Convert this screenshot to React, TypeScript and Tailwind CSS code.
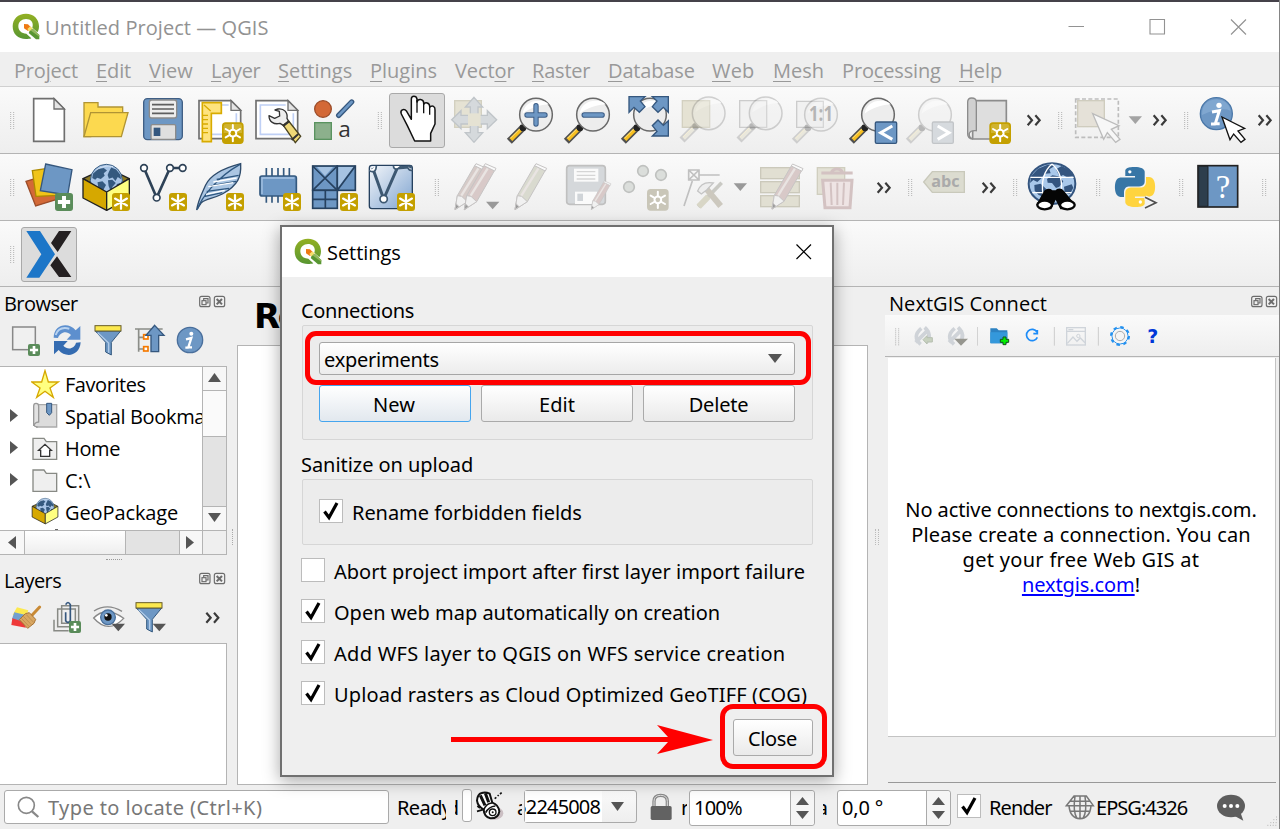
import React from "react";

type Pt = { children?: React.ReactNode };
type GlyphProps = Pt & { o: [number, number]; x: number; y: number; w: number; h: number; className?: string };

/* Drawing sheets: every sheet is drawn at three units per pixel from its own origin. */
const A: [number, number] = [0, 0];
const B: [number, number] = [380, 80];
const C: [number, number] = [800, 80];
const D: [number, number] = [0, 150];
const E: [number, number] = [0, 285];
const F: [number, number] = [0, 555];
const G: [number, number] = [380, 770];
const H: [number, number] = [820, 770];
const I: [number, number] = [870, 280];

function Glyph({ o, x, y, w, h, className = "", children }: GlyphProps) {
  return (
    <svg
      width={w}
      height={h}
      viewBox={`${(x - o[0]) * 3} ${(y - o[1]) * 3} ${w * 3} ${h * 3}`}
      className={`block shrink-0 ${className}`}
      fill="none"
    >
      {children}
    </svg>
  );
}

const T1 = { y: 87, h: 66 };
const T2 = { y: 154, h: 66 };

function Grip({ x, y }: { x: number; y: number }) {
  return (
    <g stroke="#b3b3b3" strokeWidth="3" strokeDasharray="3 3">
      <path d={`M${x} ${y}v51M${x + 9} ${y}v51`} />
    </g>
  );
}

function More({ x, y }: { x: number; y: number }) {
  return (
    <g transform={`translate(${x} ${y})`} stroke="#3a3a3a" strokeWidth="6.5">
      <path d="M2 -15L15 0L2 15M25 -15L38 0L25 15" />
    </g>
  );
}

function Down({ x, y, c = "#999" }: { x: number; y: number; c?: string }) {
  return <path d={`M${x - 20} ${y - 11}h40l-20 23z`} fill={c} />;
}

function Gold({ x, y, s = 65, plain = false, dim = false }: { x: number; y: number; s?: number; plain?: boolean; dim?: boolean }) {
  return (
    <g transform={`translate(${x} ${y}) scale(${s / 65})`}>
      <rect width="65" height="65" rx="11" fill={dim ? "#c9c6b8" : "#c4a000"} />
      {!dim && !plain && <path d="M5 32V12q0-7 7-7h41q7 0 7 7v20z" fill="#d9bf4e" opacity=".6" />}
      <g stroke="#fff" strokeWidth={plain ? 8 : 6} strokeLinecap="round">
        <path d="M32.5 8V57M11 20L54 45M54 20L11 45" />
        {!plain && <circle cx="32.5" cy="32.5" r="13" fill="#fff" stroke="none" />}
      </g>
      {!plain && <circle cx="32.5" cy="32.5" r="7" fill={dim ? "#c9c6b8" : "#c4a000"} />}
    </g>
  );
}

function Plus({ x, y, s }: { x: number; y: number; s: number }) {
  return (
    <g transform={`translate(${x} ${y}) scale(${s / 50})`}>
      <rect width="50" height="50" rx="8" fill="#5a8c5a" />
      <path d="M25 8V42M8 25H42" stroke="#fff" strokeWidth="11" />
    </g>
  );
}

function Mag({ x, y, dim = false, children }: Pt & { x: number; y: number; dim?: boolean }) {
  return (
    <g transform={`translate(${x} ${y})`}>
      <g opacity={dim ? 0.28 : 1}>
        <path d="M-80 80L-38 38" stroke={dim ? "#777" : "#505050"} strokeWidth="21" />
        <path d="M-75 75L-46 46" stroke={dim ? "#d8d0a8" : "#f8c020"} strokeWidth="11" />
        <path d="M-77 71L-48 42" stroke="#ffe58c" strokeWidth="3" />
        <circle cx="-39" cy="39" r="10" fill="#222" />
        <circle r="49" fill="#ededed" stroke="#696969" strokeWidth="4.5" />
        <path d="M-40 -3C-37 -28 -17 -42 7 -42C26 -42 35 -36 38 -30C17 -32 -15 -21 -40 -3Z" fill="#fff" />
      </g>
      {children}
    </g>
  );
}

function Globe({ x, y, r, dark = "#34597f", sea = "#a9c5e6" }: { x: number; y: number; r: number; dark?: string; sea?: string }) {
  return (
    <g transform={`translate(${x} ${y}) scale(${r / 50})`}>
      <circle r="49" fill={sea} stroke={dark} strokeWidth="3" />
      <path
        fill={dark}
        d="M-41 -20L-25 -35L-8 -38L2 -30L-8 -22L-5 -14L-17 -4L-28 -8L-34 -2L-43 -7ZM-27 6L-12 3L-1 14L-8 27L-16 42L-24 27ZM8 -26L15 -39L30 -33L43 -17L45 -3L35 -10L28 2L19 -9L8 -5L4 -16ZM5 0L18 -2L29 8L19 20L14 35L7 17ZM32 11L43 8L39 25L30 28Z"
      />
      <path d="M-30 -32Q-4 -49 20 -42" stroke="#fff" strokeWidth="3" opacity=".5" />
    </g>
  );
}

function PkgBox({ x, y, s }: { x: number; y: number; s: number }) {
  return (
    <g transform={`translate(${x} ${y}) scale(${s})`} strokeLinejoin="round">
      <path d="M249 86L320 53L388 86L320 126Z" fill="#8d7a22" stroke="#222" strokeWidth="4" />
      <Globe x={319} y={91} r={49} />
      <path d="M249 86L320 126V181L249 144Z" fill="#d6a800" stroke="#222" strokeWidth="4" />
      <path d="M388 86L320 126V181L388 144Z" fill="#ffff80" stroke="#222" strokeWidth="4" />
    </g>
  );
}

function QLogo({ className = "" }: { className?: string }) {
  return (
    <svg width="28" height="28" viewBox="0 0 84 84" className={`block shrink-0 ${className}`} fill="none">
      <defs>
        <linearGradient id="qg" x1="0" y1="0" x2="0" y2="1">
          <stop offset="0" stopColor="#93b023" />
          <stop offset="1" stopColor="#589632" />
        </linearGradient>
      </defs>
      <path
        fill="url(#qg)"
        fillRule="evenodd"
        d="M42 2C65 2 81 18 81 40C81 48 79 54 76 58L61 44C66 28 56 18 42 18C29 18 19 27 19 40C19 53 29 62 43 62L58 76C53 78 48 78 42 78C18 78 2 63 2 40C2 18 18 2 42 2Z"
      />
      <path d="M36 33L48 34L58 44L48 54L36 46Z" fill="#ee7913" />
      <path d="M46 48L55 40L65 50L55 58Z" fill="#f5e06c" />
      <path d="M53 55L62 47L82 66V79H72L50 60Z" fill="#589632" />
      <path d="M62 47L82 66V71L55 52Z" fill="#93b85c" />
    </svg>
  );
}

function Pencil({ x, y, fill = "#d8c9c8" }: { x: number; y: number; fill?: string }) {
  return (
    <g transform={`translate(${x} ${y})`} stroke="#c6c4c4" strokeWidth="3" strokeLinejoin="round">
      <path d="M0 138L7 96L59 6L91 20L37 114Z" fill={fill} />
      <path d="M0 138L7 96L20 98L37 114Z" fill="#f1f1f1" />
      <path d="M0 138L3 120L12 129Z" fill="#999" />
      <path d="M59 6L63 0L95 14L91 22Z" fill="#fafafa" />
      <path d="M19 96L70 14" stroke="#e9e4e2" strokeWidth="7" />
    </g>
  );
}

function Funnel({ x, y }: { x: number; y: number }) {
  return (
    <g transform={`translate(${x} ${y})`} stroke="#34597f" strokeWidth="3">
      <path d="M2 17H78L50 51V89L33 80V51Z" fill="#6d97c4" />
      <path d="M9 22L42 53V82" stroke="#b1cbe8" strokeWidth="4" />
      <rect x="1" y="1" width="78" height="16" fill="#fce94f" stroke="#685d28" />
    </g>
  );
}

function PageShape({ x }: { x: number }) {
  return (
    <g transform={`translate(${x} 0)`}>
      <path d="M2 302H98L127 331V416H2Z" fill="#fff" stroke="#6f6f6f" strokeWidth="5" />
      <path d="M91 315H15V403H114V340" stroke="#bfd0f5" strokeWidth="5" />
      <path d="M98 302V331H127Z" fill="#e5e5e5" stroke="#6f6f6f" strokeWidth="4" />
    </g>
  );
}

function Toolbar1() {
  const t = T1;
  return (
    <div className="flex h-[67px] shrink-0 border-b border-[#b4b4b4] bg-gradient-to-b from-[#fafafa] to-[#eeeeee]">
      <Glyph o={A} x={0} w={20} {...t}><Grip x={32} y={336} /></Glyph>
      <Glyph o={A} x={20} w={57} {...t}>
        <path d="M101 296H162L193 327V424H101Z" fill="#fff" stroke="#6f6f6f" strokeWidth="5" />
        <path d="M162 296V327H193Z" fill="#e5e5e5" stroke="#6f6f6f" strokeWidth="4" />
      </Glyph>
      <Glyph o={A} x={77} w={57} {...t}>
        <g fill="#fcd94f" stroke="#b09434" strokeWidth="4">
          <path d="M252 308H294V321H368V340H272V410H252Z" />
          <path d="M272 338H384L364 410H252Z" />
        </g>
      </Glyph>
      <Glyph o={A} x={134} w={58} {...t}>
        <rect x="431" y="296" width="116" height="123" rx="11" fill="#6d97c4" stroke="#405f85" strokeWidth="4" />
        <rect x="448" y="300" width="82" height="54" rx="7" fill="#ededed" stroke="#8b8b8b" strokeWidth="4" />
        <path d="M456 314H522M456 327H522M456 340H522" stroke="#5e5e5e" strokeWidth="5" />
        <rect x="453" y="374" width="74" height="44" rx="4" fill="#dfdfdf" stroke="#8b8b8b" strokeWidth="4" />
        <rect x="461" y="383" width="20" height="25" fill="#35577e" />
      </Glyph>
      <Glyph o={A} x={192} w={57} {...t}>
        <PageShape x={595} />
        <path d="M607 308H664V340H634V425H607Z" fill="#fee37e" stroke="#d8ab00" strokeWidth="5" />
        <path d="M612 315L632 333M608 346H624M608 359H624M608 372H624M608 385H624M608 398H624" stroke="#d8ab00" strokeWidth="4" />
        <Gold x={666} y={367} />
      </Glyph>
      <Glyph o={A} x={249} w={58} {...t}>
        <PageShape x={766} />
        <path d="M834 327C852 324 864 338 861 355L866 364L850 376L840 370C822 375 807 365 807 347L824 355L839 348L838 334L825 330Z" fill="#eee" stroke="#333" strokeWidth="4" strokeLinejoin="round" />
        <path d="M850 376L866 363L902 409L886 428Z" fill="#efd877" stroke="#4a4320" strokeWidth="4" />
        <path d="M849 379L868 364M875 420L895 402" stroke="#333" strokeWidth="6" />
      </Glyph>
      <Glyph o={A} x={307} w={58} {...t}>
        <circle cx="969" cy="327" r="25" fill="#d36937" stroke="#9b4d2a" strokeWidth="4" />
        <path d="M1016 346L1055 306" stroke="#35577e" strokeWidth="16" strokeLinecap="round" />
        <path d="M1016 346L1055 306" stroke="#6d97c4" strokeWidth="8" strokeLinecap="round" />
        <rect x="944" y="368" width="50" height="50" fill="#8cb08c" stroke="#5a9360" strokeWidth="4" />
        <text x="1015" y="412" fontSize="68" fill="#333" fontFamily="Open Sans">a</text>
      </Glyph>
      <Glyph o={A} x={365} w={24} {...t}><Grip x={1135} y={336} /></Glyph>
      <div className="mt-[6px] h-[55px] w-[56px] shrink-0 overflow-hidden rounded-[3px] border border-[#a9a9a9] bg-[#dcdcdc]">
        <Glyph o={B} x={390} y={94} w={54} h={53}>
          <path
            d="M104 183L82 137L64 102C59 90 72 84 80 94L94 118V57C94 46 109 46 111 57V66C114 55 130 57 131 68V73C135 65 149 68 149 79V82C157 74 166 80 165 90V132L152 160V183Z"
            fill="#fff" stroke="#111" strokeWidth="4.5" strokeLinejoin="round"
          />
          <path d="M111 60V98M131 68V100M149 80V104" stroke="#111" strokeWidth="4" />
        </Glyph>
      </div>
      <Glyph o={B} x={445} w={57} {...t}>
        <rect x="224" y="62" width="80" height="80" fill="#e5e2d3" stroke="#d3d0c0" strokeWidth="4" />
        <path d="M282 52L308 81H294V106H322V92L350 119L322 146V132H294V158H308L282 187L256 158H271V132H243V146L215 119L243 92V106H271V81H256Z" fill="#d5d9dc" stroke="#c0c5c9" strokeWidth="4" />
        <rect x="264" y="100" width="38" height="38" fill="#e5e2d3" />
      </Glyph>
      <Glyph o={B} x={502} w={57} {...t}>
        <Mag x={468} y={104}>
          <path d="M-27 1H27M0 -27V28" stroke="#3b5c85" strokeWidth="16" strokeLinecap="round" />
          <path d="M-27 1H27M0 -27V28" stroke="#6d97c4" strokeWidth="10" strokeLinecap="round" />
        </Mag>
      </Glyph>
      <Glyph o={B} x={559} w={57} {...t}>
        <Mag x={639} y={104}>
          <path d="M-26 1H27" stroke="#3b5c85" strokeWidth="17" strokeLinecap="round" />
          <path d="M-26 1H27" stroke="#6d97c4" strokeWidth="11" strokeLinecap="round" />
        </Mag>
      </Glyph>
      <Glyph o={B} x={616} w={57} {...t}>
        <Mag x={810} y={104} />
        <g fill="#6d97c4" stroke="#35577e" strokeWidth="4">
          <path d="M747 50H795L781 63L795 80L778 97L762 82L747 97Z" />
          <path d="M865 50H817L831 63L817 80L834 97L850 82L865 97Z" />
          <path d="M865 168H817L831 154L817 137L834 120L850 136L865 122Z" />
        </g>
      </Glyph>
      <Glyph o={B} x={673} w={57} {...t}>
        <rect x="907" y="62" width="82" height="80" fill="#e5e2d3" stroke="#d3d0c0" strokeWidth="4" />
        <Mag x={986} y={100} dim />
      </Glyph>
      <Glyph o={B} x={730} w={57} {...t}>
        <path d="M1079 62H1160V142H1079Z" fill="#f1f1f1" stroke="#ccc" strokeWidth="4" />
        <Mag x={1157} y={100} dim />
      </Glyph>
      <Glyph o={C} x={787} w={57} {...t}>
        <path d="M-10 64H70V142H-10Z" fill="#f1f1f1" stroke="#ccc" strokeWidth="4" />
        <Mag x={63} y={104} dim />
        <text x="63" y="124" textAnchor="middle" fontSize="62" fontWeight="700" fill="#b5b5b5" fontFamily="Open Sans" textLength="72" lengthAdjust="spacingAndGlyphs">1:1</text>
      </Glyph>
      <Glyph o={C} x={844} w={57} {...t}>
        <Mag x={234} y={104} />
        <rect x="226" y="126" width="64" height="64" rx="4" fill="#6d97c4" stroke="#35577e" strokeWidth="4" />
        <path d="M277 138L242 158L277 178" stroke="#fff" strokeWidth="9" />
      </Glyph>
      <Glyph o={C} x={901} w={57} {...t}>
        <Mag x={405} y={104} dim />
        <rect x="397" y="126" width="63" height="64" rx="4" fill="#d6dade" stroke="#c2c5c8" strokeWidth="4" />
        <path d="M413 138L447 158L413 178" stroke="#fff" strokeWidth="9" />
      </Glyph>
      <Glyph o={C} x={958} w={59} {...t}>
        <path d="M518 62H619V177H518Z" fill="#dedede" stroke="#8c8c8c" strokeWidth="5" />
        <path d="M503 162V66Q503 54 515 54Q529 54 529 66V152Q512 150 508 160Q506 172 518 177Q503 176 503 162Z" fill="#d0d0d0" stroke="#8c8c8c" strokeWidth="4" />
        <Gold x={568} y={127} />
      </Glyph>
      <Glyph o={C} x={1017} w={33} {...t}><More x={681} y={121} /></Glyph>
      <Glyph o={C} x={1050} w={20} {...t}><Grip x={776} y={96} /></Glyph>
      <Glyph o={C} x={1070} w={56} {...t}>
        <rect x="827" y="57" width="128" height="115" stroke="#bdbdbd" strokeWidth="5" strokeDasharray="12 7" />
        <rect x="833" y="62" width="80" height="78" fill="#e5e1d8" stroke="#cfccbe" strokeWidth="4" />
        <path d="M878 101L957 137L934 148L960 178L947 187L922 158L911 178Z" fill="#f7f7f7" stroke="#bbb" strokeWidth="4" />
      </Glyph>
      <Glyph o={C} x={1126} w={20} {...t}><Down x={1006} y={120} c="#a3a3a3" /></Glyph>
      <Glyph o={C} x={1146} w={31} {...t}><More x={1059} y={121} /></Glyph>
      <Glyph o={C} x={1177} w={18} {...t}><Grip x={1154} y={96} /></Glyph>
      <Glyph o={C} x={1195} w={55} {...t}>
        <circle cx="1249" cy="101" r="48" fill="#6d97c4" stroke="#4a77a8" strokeWidth="4" />
        <path d="M1206 105Q1206 60 1250 58Q1285 60 1292 92Q1260 80 1206 105Z" fill="#8db2d8" opacity=".6" />
        <circle cx="1257" cy="76" r="8" fill="#fff" />
        <path d="M1236 96L1258 92L1246 131H1259M1233 132H1247" stroke="#fff" strokeWidth="9" />
        <path d="M1266 111L1334 145L1314 153L1335 178L1323 187L1301 162L1290 179Z" fill="#fff" stroke="#111" strokeWidth="4" />
      </Glyph>
      <Glyph o={C} x={1250} w={29} {...t}><More x={1374} y={121} /></Glyph>
    </div>
  );
}

const PY1 = "M14.25.18l.9.2.73.26.59.3.45.32.34.34.25.34.16.33.1.3.04.26.02.2-.01.13V8.5l-.05.63-.13.55-.21.46-.26.38-.3.31-.33.25-.35.19-.35.14-.33.1-.3.07-.26.04-.21.02H8.77l-.69.05-.59.14-.5.22-.41.27-.33.32-.27.35-.2.36-.15.37-.1.35-.07.32-.04.27-.02.21v3.06H3.17l-.21-.03-.28-.07-.32-.12-.35-.18-.36-.26-.36-.36-.35-.46-.32-.59-.28-.73-.21-.88-.14-1.05-.05-1.23.06-1.22.16-1.04.24-.87.32-.71.36-.57.4-.44.42-.33.42-.24.4-.16.36-.1.32-.05.24-.01h.16l.06.01h8.16v-.83H6.18l-.01-2.75-.02-.37.05-.34.11-.31.17-.28.25-.26.31-.23.38-.2.44-.18.51-.15.58-.12.64-.1.71-.06.77-.04.84-.02 1.27.05z";
const PY2 = "M21.04 6.11l.28.06.32.12.35.18.36.27.36.35.35.47.32.59.28.73.21.88.14 1.04.05 1.23-.06 1.23-.16 1.04-.24.86-.32.71-.36.57-.4.45-.42.33-.42.24-.4.16-.36.09-.32.05-.24.02-.16-.01h-8.22v.82h5.84l.01 2.76.02.36-.05.34-.11.31-.17.29-.25.25-.31.24-.38.2-.44.17-.51.15-.58.13-.64.09-.71.07-.77.04-.84.01-1.27-.04-1.07-.14-.9-.2-.73-.25-.59-.3-.45-.33-.34-.34-.25-.34-.16-.33-.1-.3-.04-.25-.02-.2.01-.13v-5.34l.05-.64.13-.54.21-.46.26-.38.3-.32.33-.24.35-.2.35-.14.33-.1.3-.06.26-.04.21-.02.13-.01h5.84l.69-.05.59-.14.5-.21.41-.28.33-.32.27-.35.2-.36.15-.36.1-.35.07-.32.04-.28.02-.21V6.07h2.09z";

function Toolbar2() {
  const t = T2;
  return (
    <div className="flex h-[67px] shrink-0 border-b border-[#b4b4b4] bg-gradient-to-b from-[#fafafa] to-[#eeeeee]">
      <Glyph o={D} x={0} w={20} {...t}><Grip x={32} y={87} /></Glyph>
      <Glyph o={D} x={20} w={57} {...t}>
        <path d="M78 94L150 72L178 146L107 168Z" fill="#d36937" stroke="#9b4d2a" strokeWidth="4" />
        <path d="M97 62L165 52L176 136L108 139Z" fill="#f0c419" stroke="#ad8a00" strokeWidth="4" />
        <path d="M137 42L216 59L203 135L121 122Z" fill="#6d97c4" stroke="#35577e" strokeWidth="4" />
        <Plus x={165} y={129} s={54} />
      </Glyph>
      <Glyph o={D} x={77} w={57} {...t}><PkgBox x={0} y={0} s={1} /><Gold x={336} y={129} s={54} plain /></Glyph>
      <Glyph o={D} x={134} w={58} {...t}>
        <path d="M432 54L470 143L510 54H548" stroke="#2e4257" strokeWidth="8" />
        <g fill="#fff" stroke="#2e4257" strokeWidth="5"><circle cx="432" cy="54" r="10" /><circle cx="470" cy="143" r="10" /><circle cx="510" cy="54" r="10" /><circle cx="548" cy="54" r="10" /></g>
        <Gold x={507} y={129} s={54} plain />
      </Glyph>
      <Glyph o={D} x={192} w={57} {...t}>
        <path d="M590 180C594 151 604 134 617 105C631 76 668 55 722 41C724 78 716 105 667 132C637 147 619 145 604 158Z" fill="#abc6e3" stroke="#2e4b6b" strokeWidth="4" />
        <path d="M592 178C603 145 650 82 720 43M612 140L667 128M620 124L687 115M632 108L708 94M650 88L716 76" stroke="#2e5780" strokeWidth="4" />
        <path d="M625 110L700 98M640 96L710 84M618 133L674 121" stroke="#fff" strokeWidth="4" />
        <Gold x={678} y={129} s={54} plain />
      </Glyph>
      <Glyph o={D} x={249} w={58} {...t}>
        <path d="M799 54V80M816 54V80M834 54V80M851 54V80M868 54V80M799 138V158M816 138V158M834 138V158" stroke="#34597f" strokeWidth="5" />
        <rect x="780" y="78" width="109" height="60" rx="6" fill="#6d97c4" stroke="#34597f" strokeWidth="5" />
        <path d="M786 132V84H883" stroke="#a8c5e4" strokeWidth="4" />
        <Gold x={849} y={129} s={54} plain />
      </Glyph>
      <Glyph o={D} x={307} w={56} {...t}>
        <g fill="#6d97c4" stroke="#26415f" strokeWidth="5">
          <rect x="938" y="48" width="74" height="73" /><rect x="1012" y="48" width="54" height="73" /><rect x="938" y="121" width="74" height="54" />
        </g>
        <path d="M951 51H999L975 78ZM1015 51H1060L1015 112Z" fill="#a6c3e2" />
        <path d="M938 48L1012 121M1012 48L938 121M1012 121L1066 48M976 121V175M938 148H1012" stroke="#26415f" strokeWidth="5" />
        <Gold x={1020} y={129} s={54} plain />
      </Glyph>
      <Glyph o={D} x={363} w={57} {...t}>
        <defs><linearGradient id="vg" x1="0" y1="0" x2="1" y2="1"><stop stopColor="#f3f6fa" /><stop offset="1" stopColor="#7ea3cf" /></linearGradient></defs>
        <rect x="1108" y="46" width="129" height="130" rx="8" fill="url(#vg)" stroke="#26415f" strokeWidth="4" />
        <path d="M1118 54L1151 147L1192 54L1235 50" stroke="#3d5872" strokeWidth="9" />
        <g fill="#fff" stroke="#3d5872" strokeWidth="5"><circle cx="1151" cy="147" r="11" /><path d="M1108 62Q1128 72 1129 48M1180 48Q1184 67 1203 48M1222 48Q1225 63 1237 61" /></g>
        <Gold x={1191} y={129} s={54} plain />
      </Glyph>
      <Glyph o={D} x={420} w={29} {...t}><Grip x={1306} y={87} /></Glyph>
      <Glyph o={B} x={449} w={56} {...t}><Pencil x={225} y={251} fill="#d6cbc8" /><Pencil x={253} y={251} fill="#d8c9c8" /><Down x={338} y={376} /></Glyph>
      <Glyph o={B} x={505} w={53} {...t}><Pencil x={405} y={251} fill="#d9dacf" /></Glyph>
      <Glyph o={B} x={558} w={58} {...t}>
        <rect x="560" y="257" width="116" height="116" rx="9" fill="#d5d8db" stroke="#c0c0c0" strokeWidth="5" />
        <rect x="582" y="266" width="73" height="39" fill="#fafafa" /><path d="M590 275H646M590 286H646M590 297H646" stroke="#d5d5d5" strokeWidth="4" />
        <rect x="585" y="335" width="67" height="37" fill="#fafafa" /><rect x="592" y="341" width="17" height="22" fill="#d0d4d8" />
        <g transform="translate(634 301) scale(.62)"><Pencil x={0} y={3} /></g>
      </Glyph>
      <Glyph o={B} x={616} w={60} {...t}>
        <g fill="#dbdedb" stroke="#bfc1bf" strokeWidth="5"><circle cx="789" cy="273" r="16" /><circle cx="843" cy="285" r="16" /><circle cx="747" cy="321" r="16" /></g>
        <Gold x={801} y={327} dim />
      </Glyph>
      <Glyph o={B} x={676} w={76} {...t}>
        <g stroke="#c0c0c0" strokeWidth="5"><path d="M926 270H957V300H926ZM926 270L957 300M957 270L926 300M957 285H1019M937 303L912 378" /></g>
        <path d="M955 380L1025 308" stroke="#c9c9c4" strokeWidth="11" /><path d="M956 380L985 350" stroke="#d8d6c6" strokeWidth="18" />
        <path d="M978 325L1022 378" stroke="#ccc8be" strokeWidth="18" />
        <path d="M953 333Q965 302 1000 309L980 330L964 342Z" fill="#eee" stroke="#c4c4c4" strokeWidth="4" />
        <Down x={1081} y={321} />
      </Glyph>
      <Glyph o={B} x={752} w={58} {...t}>
        <g fill="#e1dfd2" stroke="#cbc9bb" strokeWidth="4"><rect x="1142" y="263" width="116" height="33" /><rect x="1142" y="305" width="116" height="33" /><rect x="1142" y="347" width="116" height="33" /></g>
        <g transform="translate(1176 252) scale(.98)"><Pencil x={0} y={0} /></g>
      </Glyph>
      <Glyph o={C} x={810} w={55} {...t}>
        <rect x="52" y="263" width="82" height="80" fill="#e3e1d5" stroke="#d0cebf" strokeWidth="4" />
        <path d="M68 301H156L150 383H75Z" fill="#eee4e4" />
        <path d="M68 301H156L150 383H75ZM64 279H158M94 278Q98 267 111 267Q124 267 128 278" stroke="#d3c2c2" strokeWidth="9" />
        <path d="M92 308L95 375M112 308V375M132 308L129 375" stroke="#d3c2c2" strokeWidth="6" />
      </Glyph>
      <Glyph o={C} x={865} w={35} {...t}><More x={231} y={323} /></Glyph>
      <Glyph o={C} x={900} w={17} {...t}><Grip x={326} y={297} /></Glyph>
      <Glyph o={C} x={917} w={58} {...t}>
        <path d="M371 306L397 275H493V337H397Z" fill="#dcdcd0" stroke="#c9c9bb" strokeWidth="4" />
        <text x="394" y="322" fontSize="48" fontWeight="700" fill="#aaa" fontFamily="Open Sans" textLength="85" lengthAdjust="spacingAndGlyphs">abc</text>
      </Glyph>
      <Glyph o={C} x={975} w={30} {...t}><More x={546} y={323} /></Glyph>
      <Glyph o={C} x={1005} w={17} {...t}><Grip x={641} y={297} /></Glyph>
      <Glyph o={C} x={1022} w={63} {...t}>
        <ellipse cx="756" cy="311" rx="70" ry="61" fill="#a9c8ea" stroke="#34557f" strokeWidth="6" />
        <path
          fill="#34557f"
          d="M694 287L714 266L743 254L765 257L748 268L752 280L735 281L722 297L712 306L700 300L690 309ZM703 315L722 311L738 326L731 350L716 345L704 332ZM768 268L785 258L808 270L820 289L801 292L789 285L779 291ZM741 297L757 286L775 289L790 304L778 320L768 324L756 309L743 308ZM792 320L815 313L820 323L810 342L794 338Z"
        />
        <path d="M691 292H821M697 338H815M756 252Q720 282 729 345M756 252Q792 282 783 345" stroke="#fff" strokeWidth="4" />
        <path d="M709 374L732 333Q739 324 752 327L757 331H767L771 327Q784 323 792 333L826 374L814 388H781L767 359L754 388H720Z" fill="#050505" />
        <g fill="#fff" stroke="#050505" strokeWidth="7"><ellipse cx="734" cy="375" rx="22" ry="13" /><ellipse cx="802" cy="375" rx="22" ry="13" /></g>
      </Glyph>
      <Glyph o={C} x={1085} w={25} {...t}><Grip x={890} y={297} /></Glyph>
      <Glyph o={C} x={1110} w={60} {...t}>
        <g transform="translate(945 261) scale(5)"><path d={PY1} fill="#3776a6" /><path d={PY2} fill="#ffd43f" /><circle cx="8.9" cy="2.9" r="1" fill="#fff" /><circle cx="15.2" cy="21" r="1" fill="#fff" /></g>
        <path d="M1035 352L1068 368L1035 384" stroke="#f5f5f5" strokeWidth="12" /><path d="M1035 352L1068 368L1035 384" stroke="#505050" strokeWidth="5" />
      </Glyph>
      <Glyph o={C} x={1170} w={22} {...t}><Grip x={1139} y={297} /></Glyph>
      <Glyph o={C} x={1192} w={58} {...t}>
        <rect x="1194" y="257" width="119" height="124" fill="#6d97c4" stroke="#222" strokeWidth="5" />
        <path d="M1196 259H1224V379H1196Z" fill="#2d3e4d" stroke="#1f2327" strokeWidth="3" />
        <text x="1269" y="353" textAnchor="middle" fontSize="98" fill="#fff" fontFamily="Liberation Serif">?</text>
      </Glyph>
      <Glyph o={C} x={1250} w={29} {...t}><Grip x={1388} y={297} /></Glyph>
    </div>
  );
}

function Toolbar3() {
  return (
    <div className="flex h-[66px] shrink-0 border-b border-[#b4b4b4] bg-gradient-to-b from-[#fafafa] to-[#eeeeee]">
      <Glyph o={D} x={0} y={221} w={21} h={65}><Grip x={32} y={288} /></Glyph>
      <div className="mt-[6px] h-[55px] w-[56px] rounded-[3px] border border-[#a9a9a9] bg-[#dcdcdc]">
        <Glyph o={D} x={22} y={228} w={54} h={53}>
          <path d="M79 243H120L165 313L118 383H79L124 313Z" fill="#1c76c8" />
          <path d="M177 243H214L173 306L153 279ZM171 319L214 381H177L151 346Z" fill="#242021" />
        </Glyph>
      </div>
    </div>
  );
}

function DockButtons({ o, x, y }: { o: [number, number]; x: number; y: number }) {
  return (
    <Glyph o={o} x={x} y={y} w={29} h={14}>
      <g transform={`translate(${(x - o[0]) * 3} ${(y - o[1]) * 3})`} stroke="#6c6c6c" strokeWidth="3.5">
        <rect x="5" y="4" width="31" height="31" rx="6" /><rect x="12" y="17" width="12" height="12" /><path d="M17 17V11H30V24H24" />
        <rect x="49" y="4" width="31" height="31" rx="6" /><path d="M56 12L72 28M72 12L56 28" strokeWidth="6" />
      </g>
    </Glyph>
  );
}

function Tri({ dir }: { dir: "up" | "down" | "left" | "right" }) {
  const d = { up: "M1 10L7.5 1L14 10Z", down: "M1 2H14L7.5 11Z", left: "M11 0V13L3 6.5Z", right: "M4 0V13L12 6.5Z" }[dir];
  return <svg width="15" height="13" viewBox="0 0 15 13" className="block shrink-0"><path d={d} fill="#555" /></svg>;
}

function TreeRow({ arrow = false, icon, label, k, t = "tracking-[-0.35px]" }: { arrow?: boolean; icon: React.ReactNode; label: string; k: number; t?: string }) {
  return (
    <div className="flex h-8 w-[202px] items-center overflow-hidden">
      <div className="-mt-[3px] w-[31px] shrink-0 pl-[6px]">{arrow && <Tri dir="right" />}</div>
      <Glyph o={E} x={31} y={368 + 32 * k} w={33} h={32}>{icon}</Glyph>
      <span className={`whitespace-nowrap pl-px font-['Open_Sans',sans-serif] text-[20px] text-black ${t}`}>{label}</span>
    </div>
  );
}

function LeftDock() {
  return (
    <div className="flex w-[227px] shrink-0 flex-col">
      <div className="flex h-[34px] items-center justify-between pl-1">
        <span className="font-['Open_Sans',sans-serif] text-[20px] tracking-[-0.55px]">Browser</span>
        <div className="-mt-[5px]"><DockButtons o={E} x={198} y={294} /></div>
      </div>
      <div className="flex h-[45px] shrink-0">
        <Glyph o={E} x={0} y={321} w={46} h={45}><rect x="38" y="126" width="68" height="68" stroke="#888" strokeWidth="4.5" fill="#f0f0f0" /><Plus x={84} y={177} s={36} /></Glyph>
        <Glyph o={E} x={46} y={321} w={42} h={45}>
          <path d="M161 158C162 118 205 110 227 136L241 123V164H200L213 150C198 134 179 144 174 159Z" fill="#5d8fce" />
          <path d="M242 172C239 214 196 220 176 195L162 208V168H203L190 182C204 197 224 190 228 173Z" fill="#356cb1" />
          <path d="M167 150Q176 123 208 131" stroke="#b9d3f0" strokeWidth="6" />
        </Glyph>
        <Glyph o={E} x={88} y={321} w={44} h={45}><Funnel x={284} y={121} /></Glyph>
        <Glyph o={E} x={132} y={321} w={40} h={45}>
          <path d="M405 132H488M416 132V200M416 157H432M416 192H432" stroke="#8b8d88" strokeWidth="5" />
          <g fill="#fff" stroke="#f57900" strokeWidth="5"><rect x="431" y="149" width="13" height="13" /><rect x="431" y="185" width="13" height="13" /></g>
          <path d="M464 121L492 151H476V200H453V151H438Z" fill="#6d97c4" stroke="#35577e" strokeWidth="4" />
        </Glyph>
        <Glyph o={E} x={172} y={321} w={38} h={45}>
          <circle cx="570" cy="165" r="38" fill="#6d97c4" stroke="#4a6f9c" strokeWidth="4" /><circle cx="574" cy="146" r="6" fill="#fff" />
          <path d="M558 163L574 159L565 187H576M556 188H566" stroke="#fff" strokeWidth="7" />
        </Glyph>
      </div>
      <div className="flex h-[189px] shrink-0 flex-col border border-l-0 border-[#b4b4b4] bg-white">
        <div className="flex h-[163px] shrink-0">
          <div className="flex w-[202px] flex-col pt-[2px]">
            <TreeRow k={0} t="tracking-[-0.45px]" label="Favorites" icon={<path d="M135 254L145 288H175L150 306L160 334L135 316L110 334L120 306L95 288H125Z" fill="#ffff80" stroke="#d6a800" strokeWidth="4" />} />
            <TreeRow k={1} t="tracking-[-0.35px]" arrow label="Spatial Bookmarks" icon={<><path d="M113 356H170V423H108" fill="#dcdcdc" stroke="#aaa" strokeWidth="4" /><path d="M101 420V360Q101 352 108 352Q116 352 116 360V408Q102 409 104 420L113 424" fill="#e2e2e2" stroke="#999" strokeWidth="4" /><path d="M140 352H155V380L148 388L140 380Z" fill="#6d97c4" stroke="#35577e" strokeWidth="3" /></>} />
            <TreeRow k={2} arrow label="Home" icon={<><path d="M99 457H132L139 467H170V520H99Z" fill="#efefef" stroke="#888a85" strokeWidth="4" /><path d="M116 493L135 475L154 493H149V511H122V493Z" fill="#fff" stroke="#333" strokeWidth="4" /></>} />
            <TreeRow k={3} t="tracking-[0.2px]" arrow label="C:\" icon={<path d="M99 552H132L139 562H170V616H99Z" fill="#efefef" stroke="#888a85" strokeWidth="4" />} />
            <TreeRow k={4} t="tracking-[-0.1px]" label="GeoPackage" icon={<PkgBox x={-42} y={613} s={0.556} />} />
            <div className="flex pl-[55px]"><div className="h-px w-[3px] bg-[#666]" /></div>
          </div>
          <div className="flex w-6 flex-col border-l border-[#b4b4b4] bg-[#e3e3e3]">
            <div className="flex h-[24px] items-center justify-center border-b border-[#b4b4b4] bg-[#f7f7f7]"><Tri dir="up" /></div>
            <div className="h-[46px] border-b border-[#b4b4b4] bg-[#fafafa]" />
            <div className="h-[69px]" />
            <div className="flex h-6 items-center justify-center border-t border-[#b4b4b4] bg-[#f7f7f7] pb-[2px]"><Tri dir="down" /></div>
          </div>
        </div>
        <div className="flex h-6 border-t border-[#b4b4b4]">
          <div className="flex w-[25px] items-center justify-center border-r border-[#b4b4b4] bg-[#f7f7f7]"><Tri dir="left" /></div>
          <div className="w-[101px] border-r border-[#b4b4b4] bg-gradient-to-b from-white to-[#eee]" />
          <div className="w-[53px] bg-[#e3e3e3]" />
          <div className="flex w-6 items-center justify-center border-x border-[#b4b4b4] bg-[#f7f7f7] pr-[3px]"><Tri dir="right" /></div>
          <div className="flex-1 bg-[#efefef]" />
        </div>
      </div>
      <div className="flex h-[9px] items-center justify-center"><div className="h-px w-4 border-t border-dotted border-[#999]" /></div>
      <div className="flex h-[33px] items-center justify-between pl-1">
        <span className="font-['Open_Sans',sans-serif] text-[20px] tracking-[-0.55px]">Layers</span>
        <div className="-mt-[3px]"><DockButtons o={E} x={198} y={294} /></div>
      </div>
      <div className="flex h-[46px] shrink-0">
        <Glyph o={F} x={0} y={597} w={46} h={46}>
          <path d="M51 157L85 166L76 190L38 180Z" fill="#fce94f" /><path d="M43 172L77 180L68 205L36 192Z" fill="#729fcf" /><path d="M37 190L70 200L78 218L34 210Z" fill="#ef3939" />
          <path d="M119 156L96 181" stroke="#c98a35" strokeWidth="9" strokeLinecap="round" /><path d="M76 176L88 173L107 193L102 205L83 220L58 194Z" fill="#d9a762" stroke="#a87333" strokeWidth="3" /><path d="M70 184L94 209M64 190L88 215M79 179L101 202" stroke="#b08246" strokeWidth="2" />
        </Glyph>
        <Glyph o={F} x={46} y={597} w={42} h={46}>
          <path d="M162 194V227H206M173 162V215H226V162ZM185 152V205H236V152Z" stroke="#888a85" strokeWidth="4.5" />
          <path d="M197 172V197Q204 207 211 197V149Q204 136 197 149" stroke="#35577e" strokeWidth="5" /><Plus x={207} y={198} s={36} />
        </Glyph>
        <Glyph o={F} x={88} y={597} w={42} h={46}>
          <path d="M281 189Q318 151 371 190Q325 239 281 189Z" fill="#fff" stroke="#888" strokeWidth="4" />
          <path d="M282 168Q322 143 366 169" stroke="#888" strokeWidth="4" />
          <circle cx="324" cy="187" r="22" fill="#6d97c4" stroke="#486f9b" strokeWidth="4" /><circle cx="324" cy="186" r="11" fill="#111" /><circle cx="319" cy="181" r="4" fill="#fff" /><Down x={355} y={217} c="#555" />
        </Glyph>
        <Glyph o={F} x={130} y={597} w={40} h={46}><Funnel x={407} y={142} /><Down x={478} y={217} c="#555" /></Glyph>
        <Glyph o={F} x={170} y={597} w={57} h={46}><More x={617} y={188} /></Glyph>
      </div>
      <div className="h-[142px] shrink-0 border border-l-0 border-[#b4b4b4] bg-white" />
    </div>
  );
}

function RightDock() {
  return (
    <div className="flex w-[394px] shrink-0 flex-col">
      <div className="flex h-[28px] items-center justify-between pl-1">
        <span className="mt-[6px] font-['Open_Sans',sans-serif] text-[20px] tracking-[0.05px]">NextGIS Connect</span>
        <div className="mt-[2px]"><DockButtons o={E} x={198} y={294} /></div>
      </div>
      <div className="flex h-[42px] shrink-0 border-b border-[#b4b4b4] bg-gradient-to-b from-[#fafafa] to-[#eeeeee]">
        <Glyph o={I} x={885} y={315} w={22} h={41}><Grip x={77} y={145} /></Glyph>
        <Glyph o={I} x={907} y={315} w={34} h={41}>
          <g stroke="#cfd3d8" strokeWidth="11"><path d="M154 145Q125 169 152 193M164 142Q188 164 169 188M137 187L176 148" /></g>
          <path d="M159 179L171 167V173H187V186H171V192Z" fill="#c7d1bf" stroke="#b6bfb0" strokeWidth="3" />
        </Glyph>
        <Glyph o={I} x={941} y={315} w={36} h={41}>
          <g stroke="#cfd3d8" strokeWidth="11"><path d="M254 145Q225 169 252 193M264 142Q288 164 269 188M237 187L276 148" /></g>
          <path d="M253 176H294L273 197Z" fill="#96968f" />
        </Glyph>
        <Glyph o={I} x={977} y={315} w={36} h={41}><path d="M322 141V197" stroke="#ccc" strokeWidth="3" /><path d="M361 145H380L386 151H412V190H361Z" fill="#2c82c2" /><path d="M361 157H412V187Q412 190 409 190H364Q361 190 361 187Z" fill="#3498db" /><path d="M399 171H408V178H416V187H408V194H399V187H391V178H399Z" fill="#00f000" stroke="#17541b" strokeWidth="3" /></Glyph>
        <Glyph o={I} x={1013} y={315} w={36} h={41}><path d="M501 156A17 17 0 1 0 502 172M502 150V161H490" stroke="#1d8cf8" strokeWidth="5" /></Glyph>
        <Glyph o={I} x={1049} y={315} w={42} h={41}><path d="M553 141V197" stroke="#ccc" strokeWidth="3" /><rect x="590" y="143" width="56" height="52" stroke="#cfd4da" strokeWidth="4" /><path d="M590 154H646M592 190L609 171L621 184L631 174L645 188M595 149H610" stroke="#cfd4da" strokeWidth="4" /><circle cx="625" cy="168" r="5" stroke="#cfd4da" strokeWidth="3" /></Glyph>
        <Glyph o={I} x={1091} y={315} w={46} h={41}><path d="M685 141V197" stroke="#ccc" strokeWidth="3" /><circle cx="750" cy="168" r="27" stroke="#2491ef" strokeWidth="6" strokeDasharray="10.6 10.6" /><circle cx="750" cy="168" r="24" stroke="#2491ef" strokeWidth="3" /><circle cx="750" cy="168" r="22" fill="#f5f5f5" /><circle cx="750" cy="168" r="14" stroke="#aaa" strokeWidth="3" /></Glyph>
        <Glyph o={I} x={1137} y={315} w={40} h={41}><text x="848" y="188" textAnchor="middle" fontSize="57" fontWeight="700" fill="#0037d8" fontFamily="DejaVu Sans">?</text></Glyph>
      </div>
      <div className="ml-[3px] h-px shrink-0 bg-[#efefef]" />
      <div className="ml-[3px] flex h-[379px] w-[388px] shrink-0 items-center justify-center border border-l-0 border-t-0 border-[#c3c3c3] bg-white text-center font-['Noto_Sans',sans-serif] text-[20px] leading-[25px]">
        <div className="pr-px">
          <span className="tracking-[-0.1px]">No active connections to nextgis.com.</span><br />
          <span className="tracking-[0.17px]">Please create a connection. You can</span><br />
          <span className="tracking-[0.3px]">get your free Web GIS at</span><br />
          <span className="tracking-[-0.1px] text-[#0000ff] underline underline-offset-2">nextgis.com</span>!
        </div>
      </div>
      <div className="ml-[3px] mt-[45px] w-[388px] border-t border-[#999]" />
    </div>
  );
}

function Check({ on = true }: { on?: boolean }) {
  return (
    <div className="flex h-6 w-6 shrink-0 items-center justify-center border border-[#bcbcbc] bg-white">
      {on && <svg width="18" height="20" viewBox="0 0 18 20" fill="none"><path d="M2.5 10.5L7 16.5L15 2" stroke="#000" strokeWidth="3.2" /></svg>}
    </div>
  );
}

function CheckRow({ label, on = true, t }: { label: string; on?: boolean; t: string }) {
  return (
    <div className="flex h-[41px] items-center gap-[9px]">
      <div className="-mt-[2px]"><Check on={on} /></div>
      <span className={`whitespace-nowrap ${t}`}>{label}</span>
    </div>
  );
}

function Dialog() {
  const btn = "flex h-[37px] items-center justify-center rounded-[3px] border bg-gradient-to-b pt-[2px]";
  return (
    <div className="absolute left-[280px] top-[225px] flex h-[552px] w-[554px] flex-col border-2 border-[#707070] bg-[#efefef] font-['Noto_Sans',sans-serif] text-[20px] text-black shadow-[0_4px_16px_rgba(0,0,0,0.35)]">
      <div className="flex h-[50px] shrink-0 items-center bg-white pl-[12px] pr-[19px]">
        <QLogo />
        <span className="ml-[5px] mt-[2px] flex-1 font-['Open_Sans',sans-serif] tracking-[-0.05px]">Settings</span>
        <svg width="18" height="18" viewBox="0 0 18 18" fill="none"><path d="M1.5 1.5L16 16M16 1.5L1.5 16" stroke="#000" strokeWidth="1.2" /></svg>
      </div>
      <div className="flex flex-col pl-[19px] pr-[19px]">
        <div className="mt-[20px] h-[28px] leading-[27px] tracking-[-0.35px]">Connections</div>
        <div className="ml-px flex h-[115px] flex-col rounded-[2px] border border-[#d6d6d6] bg-[#ececec] pl-[16px] pr-[17px] pt-[16px]">
          <div className="relative flex h-[33px] items-center justify-between rounded-[3px] border border-[#a6a6a6] bg-gradient-to-b from-white to-[#ececec] pl-1 pr-[12px]">
            <span className="mt-[2px] tracking-[-0.25px]">experiments</span>
            <svg width="14" height="9" viewBox="0 0 14 9"><path d="M0 0H14L7 9Z" fill="#555" /></svg>
            <div className="absolute -left-[15px] -top-[12px] h-[54px] w-[506px] rounded-[11px] border-[5px] border-[#f00]" />
          </div>
          <div className="mt-[10px] grid grid-cols-3 gap-[10px]">
            <div className={`${btn} border-[#45a5ee] from-white to-[#e2e8ee] pr-[2px]`}>New</div>
            <div className={`${btn} border-[#aaa] from-white to-[#eaeaea]`}>Edit</div>
            <div className={`${btn} border-[#aaa] from-white to-[#eaeaea] pr-px tracking-[-0.2px]`}>Delete</div>
          </div>
        </div>
        <div className="mt-[11px] h-[28px] leading-[28px] tracking-[-0.05px]">Sanitize on upload</div>
        <div className="ml-px flex h-[66px] items-center rounded-[2px] border border-[#d6d6d6] bg-[#ececec] pl-[16px]">
          <CheckRow label="Rename forbidden fields" t="mt-px tracking-[-0.05px]" />
        </div>
        <div className="mt-[5px] flex flex-col">
          <CheckRow label="Abort project import after first layer import failure" on={false} t="mt-[3px] tracking-[0.02px]" />
          <CheckRow label="Open web map automatically on creation" t="mt-[3px] tracking-[-0.02px]" />
          <CheckRow label="Add WFS layer to QGIS on WFS service creation" t="mt-[3px] tracking-[0.28px]" />
          <CheckRow label="Upload rasters as Cloud Optimized GeoTIFF (COG)" t="mt-[3px] tracking-[0.12px]" />
        </div>
        <div className="relative mt-[5px] flex justify-end">
          <div className={`${btn} w-[80px] border-[#aaa] from-white to-[#eaeaea] pr-px tracking-[-0.4px]`}>Close</div>
          <div className="absolute -right-[14px] -top-[15px] h-[65px] w-[107px] rounded-[13px] border-[5px] border-[#f00]" />
          <svg className="absolute left-[150px] top-[5px]" width="264" height="32" viewBox="0 0 264 32"><path d="M0 13H217L206 1L262 16L206 30L217 18H0Z" fill="#f00" /></svg>
        </div>
      </div>
    </div>
  );
}

function Spin() {
  return (
    <div className="flex w-6 flex-col items-center justify-center gap-[6px] rounded-r border-l border-[#aaa] bg-[#f5f5f5]">
      <svg width="13" height="8" viewBox="0 0 13 8"><path d="M0 8H13L6.5 0Z" fill="#555" /></svg>
      <svg width="13" height="8" viewBox="0 0 13 8"><path d="M0 0H13L6.5 8Z" fill="#555" /></svg>
    </div>
  );
}

function StatusBar() {
  return (
    <div className="flex h-[43px] shrink-0 items-center pl-1 font-['Noto_Sans',sans-serif] text-[20px] text-black">
      <div className="mb-px flex h-[34px] w-[385px] shrink-0 items-center rounded-[3px] border border-[#aaa] bg-white">
        <Glyph o={F} x={5} y={791} w={42} h={32}><circle cx="79" cy="751" r="24" stroke="#888" strokeWidth="5" /><path d="M96 769L115 786" stroke="#888" strokeWidth="7" /></Glyph>
        <span className="mt-px pl-px tracking-[0.4px] text-[#777]">Type to locate (Ctrl+K)</span>
      </div>
      <div className="ml-2 w-[49px] shrink-0 overflow-hidden tracking-[-0.6px]">Ready</div>
      <div className="ml-[9px] flex w-[4px] shrink-0 justify-end overflow-hidden">d</div>
      <div className="mb-[4px] ml-[3px] h-[33px] w-[10px] shrink-0 rounded-[3px] border border-[#aaa] bg-white" />
      <Glyph o={G} x={472} y={786} w={39} h={43}>
        <ellipse cx="344" cy="130" rx="26" ry="19" fill="#cbbfc3" />
        <path d="M291 92Q292 73 305 69Q316 65 329 71L337 98Q355 104 358 124Q355 146 331 145Q312 140 311 119Q293 108 291 92Z" fill="#fff" stroke="#111" strokeWidth="6" />
        <path d="M301 76L315 106M316 70L326 97" stroke="#111" strokeWidth="9" />
        <path d="M311 119Q321 98 337 99M317 128Q326 110 346 108M291 124L309 119M344 86L349 82M353 78L356 75M360 72L365 68M292 108L300 114" stroke="#111" strokeWidth="5" />
        <circle cx="338" cy="127" r="10" fill="#fff" stroke="#111" strokeWidth="4" /><circle cx="338" cy="127" r="3" fill="#111" />
      </Glyph>
      <div className="ml-[6px] w-[5px] shrink-0 overflow-hidden">a</div>
      <div className="mb-[3px] ml-[2px] flex h-[33px] w-[113px] shrink-0 rounded-[3px] border border-[#aaa] bg-gradient-to-b from-[#fafafa] to-[#eee]">
        <div className="flex w-[77px] items-center justify-end overflow-hidden bg-white pr-[2px] pt-[2px]"><span className="tracking-[-0.85px]">52245008</span></div>
        <div className="flex flex-1 items-center justify-center pr-1"><svg width="13" height="9" viewBox="0 0 13 9"><path d="M0 0H13L6.5 9Z" fill="#555" /></svg></div>
      </div>
      <Glyph o={G} x={637} y={786} w={44} h={43}>
        <path d="M822 111V94Q822 76 842 76Q862 76 862 94V111" stroke="#888" strokeWidth="10" /><path d="M822 111V94Q822 76 842 76Q862 76 862 94V111" stroke="#ddd" strokeWidth="3" />
        <rect x="812" y="108" width="63" height="42" rx="5" fill="#626262" />
      </Glyph>
      <div className="w-[6px] shrink-0 overflow-hidden">r</div>
      <div className="ml-[2px] flex h-[36px] w-[126px] shrink-0 rounded-[3px] border border-[#aaa] bg-white"><span className="flex flex-1 items-center pl-[4px] tracking-[-0.8px]">100%</span><Spin /></div>
      <div className="ml-2 flex w-[5px] shrink-0 justify-end overflow-hidden">a</div>
      <div className="ml-[9px] flex h-[36px] w-[114px] shrink-0 rounded-[3px] border border-[#aaa] bg-white"><span className="flex flex-1 items-center pl-[4px] tracking-[-0.2px]">0,0 °</span><Spin /></div>
      <div className="mb-[4px] ml-[6px]"><Check /></div>
      <span className="ml-[8px] w-[73px] shrink-0 tracking-[-0.9px]">Render</span>
      <Glyph o={H} x={1062} y={786} w={34} h={43}>
        <path d="M739 107L762 78H799L820 107ZM747 107Q750 145 780 146Q810 145 813 107M780 78V146M765 79Q758 124 771 145M795 79Q802 124 789 145M750 94H809M751 124H809" stroke="#777" strokeWidth="4.5" />
      </Glyph>
      <span className="w-[100px] shrink-0 tracking-[-0.95px]">EPSG:4326</span>
      <div className="flex flex-1 justify-end">
        <Glyph o={H} x={1210} y={786} w={69} h={43}>
          <ellipse cx="1233" cy="108" rx="42" ry="34" fill="#5d5d5d" /><path d="M1240 136L1270 152L1261 126Z" fill="#5d5d5d" />
          <g fill="#fff"><circle cx="1214" cy="108" r="6" /><circle cx="1233" cy="108" r="6" /><circle cx="1252" cy="108" r="6" /></g>
          <path d="M1342 166H1372M1351 158H1372M1360 149H1372M1368 141H1372" stroke="#b5b5b5" strokeWidth="3" strokeDasharray="3 5" />
        </Glyph>
      </div>
    </div>
  );
}

const menus: [string, string, string, string][] = [
  ["Pro", "j", "ect", "w-[82px] tracking-[-0.2px]"], ["", "E", "dit", "w-[53px] tracking-[-0.1px]"], ["", "V", "iew", "w-[62px] tracking-[0px]"], ["", "L", "ayer", "w-[67px] tracking-[-0.3px]"],
  ["", "S", "ettings", "w-[92px] tracking-[0px]"], ["", "P", "lugins", "w-[85px] tracking-[0px]"], ["Vect", "o", "r", "w-[77px] tracking-[-0.1px]"], ["", "R", "aster", "w-[76px] tracking-[-0.2px]"],
  ["", "D", "atabase", "w-[104px] tracking-[-0.15px]"], ["", "W", "eb", "w-[61px] tracking-[0.2px]"], ["", "M", "esh", "w-[69px] tracking-[0px]"], ["Pro", "c", "essing", "w-[117px] tracking-[-0.15px]"], ["", "H", "elp", "w-[60px] tracking-[0px]"],
];

export default function App() {
  return (
    <div className="relative flex h-[829px] w-[1280px] flex-col overflow-hidden border-r border-[#858585] bg-[#efefef] font-['Open_Sans',sans-serif] text-[20px]">
      <div className="h-[2px] shrink-0 bg-[#45424a]" />
      <div className="flex h-[50px] shrink-0 items-center bg-white pl-[12px] text-[#929292]">
        <QLogo className="-mt-px" />
        <span className="ml-[5px] mt-px flex-1 tracking-[0.06px]">Untitled Project — QGIS</span>
        <svg width="184" height="20" viewBox="0 0 184 20" className="mr-[28px]" fill="none"><path d="M1.5 9.5H17M83 2.5H97.5V17H83ZM164 2.5L179 17.5M179 2.5L164 17.5" stroke="#929292" strokeWidth="1.1" /></svg>
      </div>
      <div className="flex h-[35px] shrink-0 items-center border-b border-[#d0d0d0] bg-[#efefef] pl-[14px] pt-[3px] text-[#999]">
        {menus.map(([a, u, b, w]) => (
          <span key={u + b} className={`shrink-0 whitespace-nowrap ${w}`}>{a}<span className="underline underline-offset-[3px] decoration-1">{u}</span>{b}</span>
        ))}
      </div>
      <Toolbar1 />
      <Toolbar2 />
      <Toolbar3 />
      <div className="flex h-[499px] shrink-0">
        <LeftDock />
        <div className="flex w-[10px] items-center justify-center"><div className="h-4 border-l border-dotted border-[#aaa]" /></div>
        <div className="flex w-[631px] shrink-0 flex-col">
          <div className="flex h-[58px] items-center pl-[17px] font-['DejaVu_Sans',sans-serif] text-[34px] font-bold tracking-[-2.5px] text-black">Re</div>
          <div className="h-[440px] border border-[#b4b4b4] bg-white" />
        </div>
        <div className="flex w-[17px] shrink-0 items-center justify-center"><div className="h-4 w-[4px] border-x border-dotted border-[#bbb]" /></div>
        <RightDock />
      </div>
      <StatusBar />
      <Dialog />
    </div>
  );
}
